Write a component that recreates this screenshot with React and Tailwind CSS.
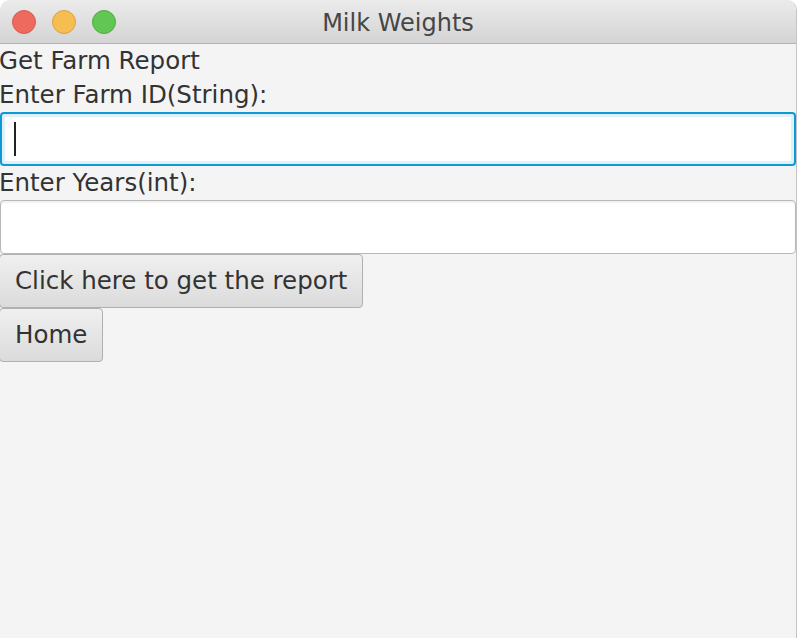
import { useState } from 'react'

const font = { fontFamily: '"DejaVu Sans", sans-serif' }

function TrafficLights() {
  return (
    <div className="flex items-center gap-[16px] pl-[12px]">
      <span className="w-[24px] h-[24px] rounded-full bg-[#ee6a5f] border border-[#d45b50]" />
      <span className="w-[24px] h-[24px] rounded-full bg-[#f6be50] border border-[#d9a240]" />
      <span className="w-[24px] h-[24px] rounded-full bg-[#62c655] border border-[#52a942]" />
    </div>
  )
}

export default function App() {
  const [farmId, setFarmId] = useState('')
  const [years, setYears] = useState('')

  return (
    <div className="w-[798px] h-[638px] bg-white overflow-hidden" style={font}>
      <div className="w-[797px] h-full bg-[#f4f4f4] border-r border-[#c4c4c4] rounded-tr-[10px] rounded-tl-[10px] overflow-hidden flex flex-col">
        {/* Title bar */}
        <div className="relative h-[44px] shrink-0 flex items-center bg-gradient-to-b from-[#ebebeb] to-[#d4d4d4] border-b border-[#b3b3b3]">
          <TrafficLights />
          <div className="absolute inset-0 flex items-center justify-center pt-[2px] text-[24px] text-[#464646]">
            Milk Weights
          </div>
        </div>

        {/* Form */}
        <div className="flex flex-col items-start text-[24.5px] text-[#333333]">
          <div className="h-[34px] leading-[34px] -ml-[1px]">Get Farm Report</div>
          <div className="h-[34px] leading-[34px] -ml-[1px]">Enter Farm ID(String):</div>
          <div className="w-[796px] h-[54px] rounded-[4px] border-[2px] border-[#0b9ad6] bg-white shadow-[inset_0_0_0_3px_#dff0f8] flex items-center pl-[12px]">
            <span className="w-[2px] h-[34px] bg-[#222]" />
            <input
              value={farmId}
              onChange={(e) => setFarmId(e.target.value)}
              className="flex-1 h-full bg-transparent outline-none"
            />
          </div>
          <div className="h-[34px] leading-[34px] -ml-[1px]">Enter Years(int):</div>
          <input
            value={years}
            onChange={(e) => setYears(e.target.value)}
            className="w-[796px] h-[54px] rounded-[4px] border border-[#b8b8b8] bg-white shadow-[inset_0_2px_2px_rgba(0,0,0,0.06)] outline-none px-[14px]"
          />
          <button className="h-[54px] px-[15px] -ml-[1px] rounded-[4px] border border-[#b0b0b0] bg-gradient-to-b from-[#f0f0f0] to-[#dbdbdb] text-[#333333]">
            Click here to get the report
          </button>
          <button className="h-[54px] px-[15px] -ml-[1px] rounded-[4px] border border-[#b0b0b0] bg-gradient-to-b from-[#f0f0f0] to-[#dbdbdb] text-[#333333]">
            Home
          </button>
        </div>
      </div>
    </div>
  )
}
